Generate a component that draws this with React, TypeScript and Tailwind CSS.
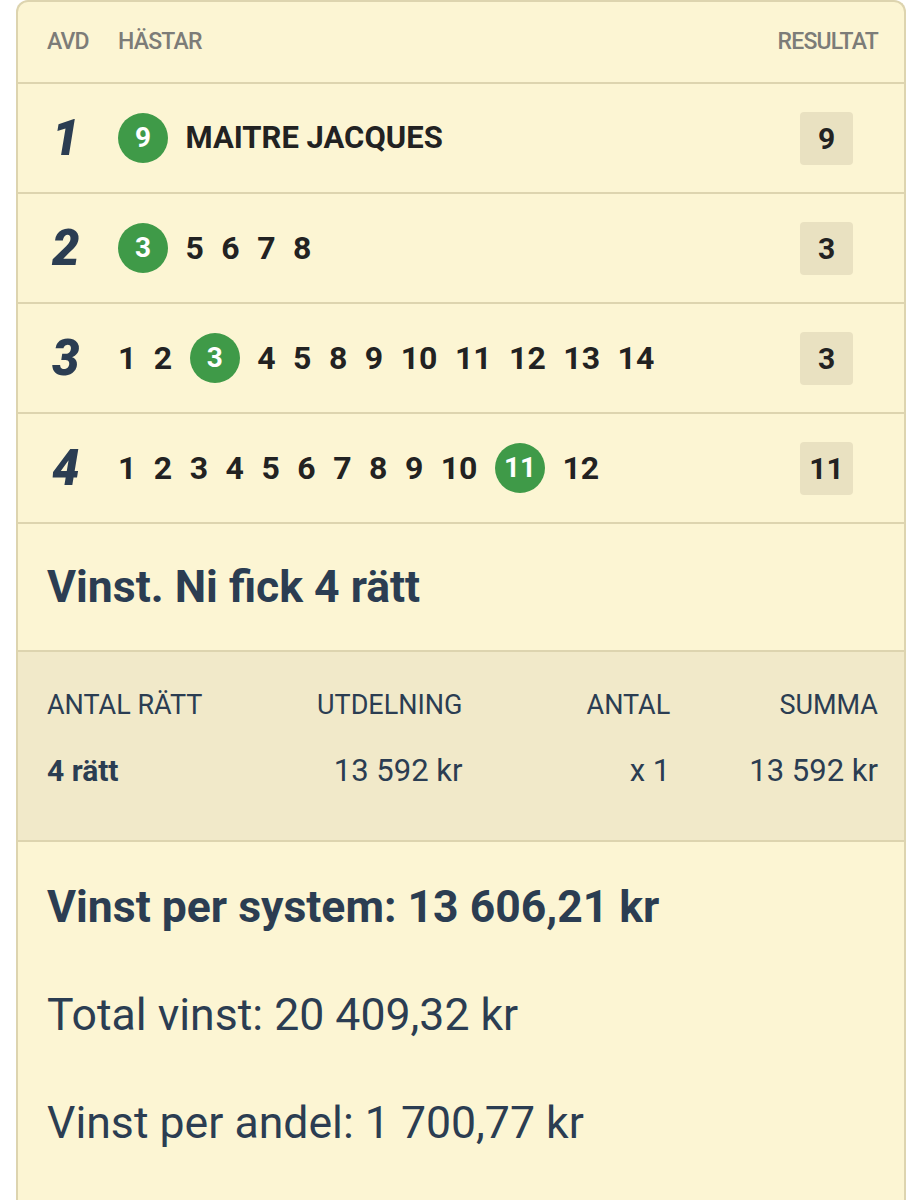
import React from "react";

type Race = {
  avd: number;
  horses: (number | string)[];
  winner: number | string;
  result: number;
};

const races: Race[] = [
  { avd: 1, horses: [9, "MAITRE JACQUES"], winner: 9, result: 9 },
  { avd: 2, horses: [3, 5, 6, 7, 8], winner: 3, result: 3 },
  { avd: 3, horses: [1, 2, 3, 4, 5, 8, 9, 10, 11, 12, 13, 14], winner: 3, result: 3 },
  { avd: 4, horses: [1, 2, 3, 4, 5, 6, 7, 8, 9, 10, 11, 12], winner: 11, result: 11 },
];

function Horse({ value, won }: { value: number | string; won: boolean }) {
  if (won) {
    return (
      <span className="flex h-[50px] w-[50px] items-center justify-center rounded-full bg-[#3f9a48] text-[28px] font-bold text-white">
        {value}
      </span>
    );
  }
  return (
    <span className={`font-bold text-[#222222] ${typeof value === "string" ? "text-[31px]" : "text-[32px]"}`}>
      {value}
    </span>
  );
}

export default function App() {
  return (
    <div className="min-h-screen bg-white pl-[16px] pr-[1px] font-['Roboto','Liberation_Sans',sans-serif]">
      <div className="rounded-t-[12px] border-2 border-b-0 border-[#ddd4af] bg-[#fcf5d3]">
        {/* header */}
        <div className="flex h-[82px] items-center border-b-2 border-[#ddd4af] pl-[29px] pr-[26px] text-[23px] font-medium tracking-[-0.8px] text-[#7c7c78]">
          <span className="w-[71px]">AVD</span>
          <span className="flex-1">HÄSTAR</span>
          <span>RESULTAT</span>
        </div>

        {races.map((r) => (
          <div
            key={r.avd}
            className="flex h-[110px] items-center border-b-2 border-[#ddd4af] pl-[29px] pr-[26px]"
          >
            <span className="w-[71px] pl-[5px] text-[49px] font-black italic leading-none text-[#2b3d52]">
              {r.avd}
            </span>
            <div className="flex flex-1 items-center gap-[17.5px]">
              {r.horses.map((h, i) => (
                <Horse key={i} value={h} won={h === r.winner} />
              ))}
            </div>
            <div className="flex w-[103px] justify-center">
              <span className="flex h-[53px] w-[53px] items-center justify-center rounded-[4px] bg-[#e9e1c1] text-[30px] font-bold text-[#222222]">
                {r.result}
              </span>
            </div>
          </div>
        ))}

        <div className="flex h-[128px] items-center border-b-2 border-[#ddd4af] pl-[29px] pr-[26px]">
          <span className="text-[44.5px] font-bold text-[#2b3d52]">Vinst. Ni fick 4 rätt</span>
        </div>

        <div className="border-b-2 border-[#ddd4af] bg-[#f1e9c9] pl-[29px] pr-[26px] pt-[38px] pb-[54px] text-[#2b3d52]">
          <div className="grid grid-cols-4 text-[27px] leading-[30px]">
            <span>ANTAL RÄTT</span>
            <span className="text-right">UTDELNING</span>
            <span className="text-right">ANTAL</span>
            <span className="text-right">SUMMA</span>
          </div>
          <div className="mt-[36px] grid grid-cols-4 text-[31px] leading-[30px]">
            <span className="text-[30px] font-bold">4 rätt</span>
            <span className="text-right">13 592 kr</span>
            <span className="text-right">x 1</span>
            <span className="text-right">13 592 kr</span>
          </div>
        </div>

        <div className="flex flex-col gap-[60px] pl-[29px] pr-[26px] pt-[41px] pb-[60px] text-[#2b3d52] leading-[48px]">
          <span className="text-[44.5px] font-bold">Vinst per system: 13 606,21 kr</span>
          <span className="text-[44.6px]">Total vinst: 20 409,32 kr</span>
          <span className="text-[44.6px]">Vinst per andel: 1 700,77 kr</span>
        </div>
      </div>
    </div>
  );
}
